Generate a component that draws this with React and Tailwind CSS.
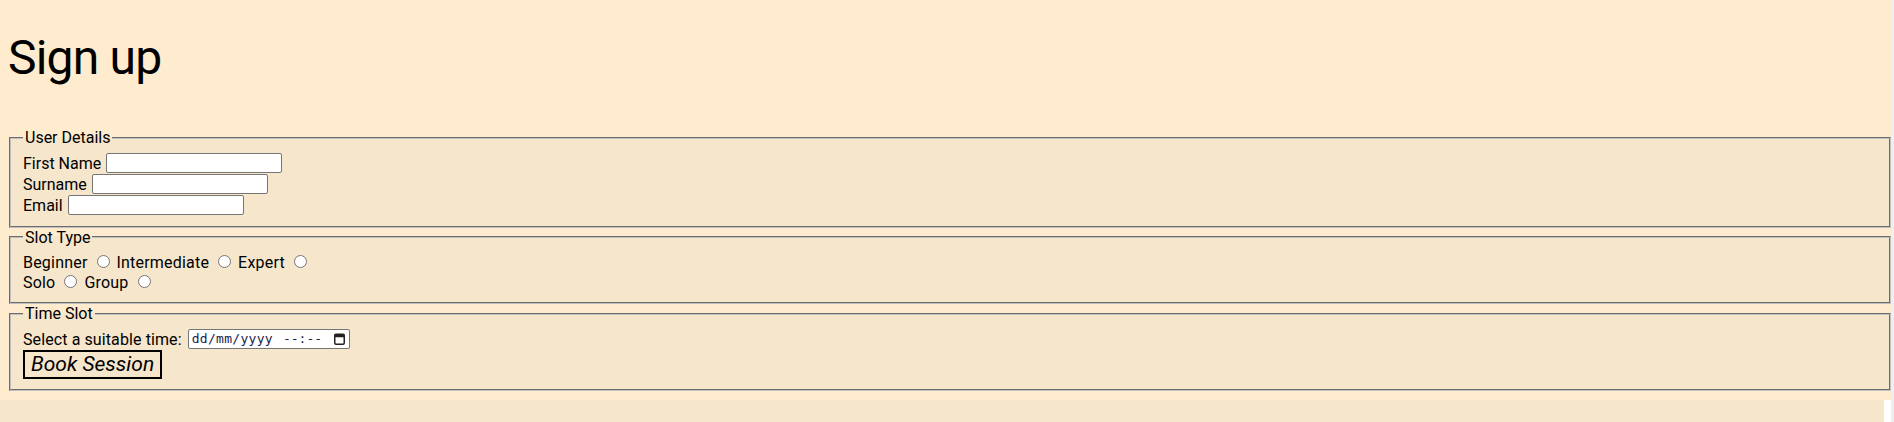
import React from 'react';

const Radio = ({ name }) => (
  <span
    role="radio"
    aria-label={name}
    className="inline-block w-[13px] h-[13px] rounded-full border border-[#767676] bg-white ml-[9px] mr-[7px] mb-[4px] shrink-0"
  ></span>
);

const TextRow = ({ label }) => (
  <div className="flex items-center h-[21px]">
    <label className="leading-[19px]">{label}</label>
    <input
      type="text"
      className="ml-[5px] w-[176px] h-[20px] bg-white border border-[#767676] rounded-[2px] outline-none"
    />
  </div>
);

const Section = ({ title, children }) => (
  <fieldset className="ml-[9px] border-2 [border-style:groove] border-[#c0c0c0] bg-[#f5e6cc] px-[12px] pt-[5.6px] pb-[10px]">
    <legend className="px-[2px] leading-[19px]">{title}</legend>
    {children}
  </fieldset>
);

const App = () => {
  return (
    <div
      className="flex w-[1894px] text-[16px] text-black"
      style={{ fontFamily: 'Roboto, "Liberation Sans", sans-serif' }}
    >
      <div className="w-[1891px] flex flex-col">
        <div className="bg-[#ffebcd] pb-[9px]">
          <h1 className="ml-[8px] mt-0 pt-[30px] mb-[42px] text-[48px] leading-[56px] font-normal tracking-[-0.8px]">Sign up</h1>

          <form>
            <Section title="User Details">
              <TextRow label="First Name" />
              <TextRow label="Surname" />
              <TextRow label="Email" />
            </Section>

            <Section title="Slot Type">
              <div className="flex items-end h-[20px]">
                <span className="leading-[19px] tracking-[0.2px]">Beginner</span>
                <Radio name="Beginner" />
                <span className="leading-[19px] tracking-[0.2px]">Intermediate</span>
                <Radio name="Intermediate" />
                <span className="leading-[19px] tracking-[0.2px]">Expert</span>
                <Radio name="Expert" />
              </div>
              <div className="flex items-end h-[20px]">
                <span className="leading-[19px] tracking-[0.2px]">Solo</span>
                <Radio name="Solo" />
                <span className="leading-[19px] tracking-[0.2px]">Group</span>
                <Radio name="Group" />
              </div>
            </Section>

            <Section title="Time Slot">
              <div className="flex items-center h-[21px]">
                <label className="leading-[19px] tracking-[0.1px]">Select a suitable time:</label>
                <div
                  className="ml-[6px] w-[162px] h-[20px] bg-white border border-[#767676] rounded-[2px] flex items-center pl-[3px] pr-[4px] text-[13px] leading-[16px] text-[#1c1c4a]"
                  style={{ fontFamily: '"DejaVu Sans Mono", "Liberation Mono", monospace' }}
                >
                  <span className="tracking-[0.3px]">dd/mm/yyyy</span>
                  <span className="ml-[10px]">--:--</span>
                  <svg className="ml-auto" width="11" height="12" viewBox="0 0 11 12">
                    <rect x="0.75" y="1.25" width="9.5" height="10" rx="1.2" fill="none" stroke="#222" strokeWidth="1.5" />
                    <rect x="0.75" y="1.25" width="9.5" height="3" fill="#222" />
                  </svg>
                </div>
              </div>
              <button
                type="button"
                className="border-2 border-black bg-transparent px-[6px] py-[1px] text-[21px] leading-[23px] italic"
              >
                Book Session
              </button>
            </Section>
          </form>
        </div>
        <div className="flex h-[22px]">
          <div className="w-[1884px] bg-[#f5e6cc]"></div>
          <div className="flex-1 bg-white"></div>
        </div>
      </div>
      <div className="w-[3px] bg-[#efefef]"></div>
    </div>
  );
};

export default App;
